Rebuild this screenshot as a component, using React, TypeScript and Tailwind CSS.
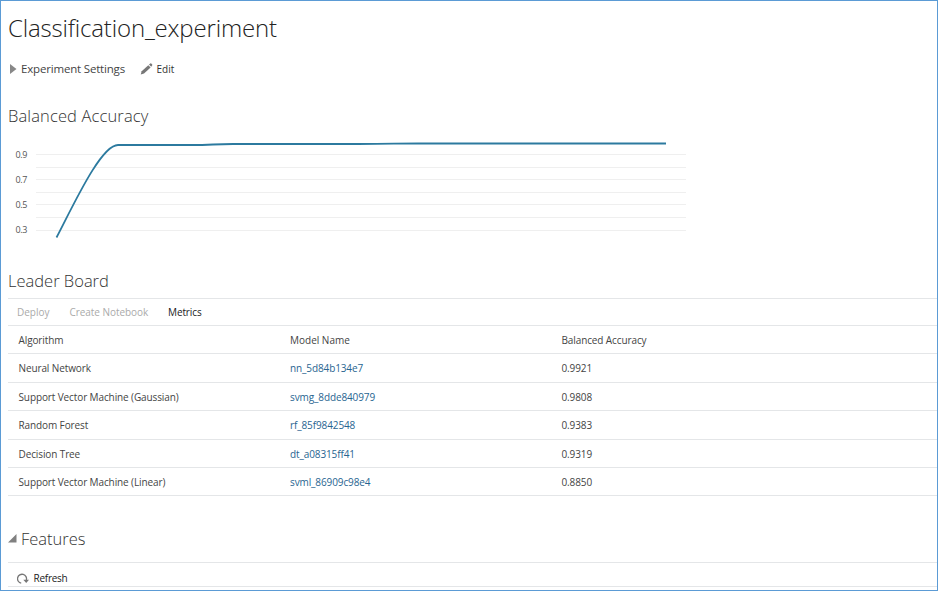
const rows = [
  { algorithm: 'Neural Network', model: 'nn_5d84b134e7', score: '0.9921', size: 'h-[29px]' },
  { algorithm: 'Support Vector Machine (Gaussian)', model: 'svmg_8dde840979', score: '0.9808', size: 'h-[28px] pt-px' },
  { algorithm: 'Random Forest', model: 'rf_85f9842548', score: '0.9383', size: 'h-[29px]' },
  { algorithm: 'Decision Tree', model: 'dt_a08315ff41', score: '0.9319', size: 'h-[28px] pt-px' },
  { algorithm: 'Support Vector Machine (Linear)', model: 'svml_86909c98e4', score: '0.8850', size: 'h-[28px] pt-px' },
];

const columns = 'grid grid-cols-[271.5px_271.5px_1fr] items-center border-b border-[#e4e6e8] pl-[10.5px] tracking-[-0.11px]';

function AccuracyChart() {
  return (
    <svg className="block h-[112px] w-[690px]" viewBox="0 0 690 112" fill="none">
      {[19, 32, 44, 57, 69, 82, 95].map((y) => (
        <path key={y} d={`M28 ${y + 0.5}H678`} stroke="#efefef" />
      ))}
      {['0.9', '0.7', '0.5', '0.3'].map((label, i) => (
        <text key={label} x="7.5" y={22.5 + i * 25.3} fontSize="9" fill="#555" textLength="12">
          {label}
        </text>
      ))}
      <path
        d="M48.5 102.5C66 69 93 10 110 10H183C205 10 205 9 225 9H350C385 9 385 8.5 410 8.5H658"
        stroke="#2c7a9f"
        strokeWidth="1.8"
      />
    </svg>
  );
}

export default function App() {
  return (
    <main className="h-[591px] w-[938px] overflow-hidden border border-[#5b9bd5] bg-white pl-[7px] font-['Open_Sans','Noto_Sans',sans-serif] text-[10px] text-[#444] whitespace-nowrap">
      <h1 className="h-[56px] pt-[10px] text-[24px] leading-[34px] font-light tracking-[-0.17px] text-[#222]">Classification_experiment</h1>
      <div className="flex h-[24px] items-center">
        <svg className="ml-[2px] h-[10px] w-[7px]" viewBox="0 0 7 10"><path d="M0 0L6.5 5L0 10Z" fill="#888" /></svg>
        <span className="ml-[4px] w-[119px] text-[11.5px] tracking-[-0.18px]">Experiment Settings</span>
        <svg className="h-[12px] w-[13px]" viewBox="0 0 13 12" fill="#777">
          <path d="M.7 11.5L1.7 8.3L8.3 2.2L10.6 4.4L4 10.4Z" />
          <path d="M9 1.6L10.3 .5Q10.8 .1 11.3 .6L12.2 1.5Q12.6 2 12.1 2.5L11.2 3.7Z" />
        </svg>
        <span className="ml-[3.5px] text-[#333]">Edit</span>
      </div>
      <h2 className="mt-[22px] h-[32px] text-[16.5px] leading-[26px] font-light tracking-[0.13px] text-[#333]">Balanced Accuracy</h2>
      <AccuracyChart />
      <h2 className="mt-[20px] h-[31px] pt-px text-[16.5px] leading-[26px] font-light text-[#333]">Leader Board</h2>
      <div className="flex h-[28px] items-center border-y border-[#e4e6e8] pl-[9px] text-[#aaa]">
        <span className="w-[52.5px]">Deploy</span>
        <span className="w-[98.5px] tracking-[-0.05px]">Create Notebook</span>
        <span className="tracking-[-0.1px] text-[#222]">Metrics</span>
      </div>
      <div className={`${columns} h-[28px] pt-[2px]`}>
        <span>Algorithm</span><span className="tracking-normal">Model Name</span><span>Balanced Accuracy</span>
      </div>
      {rows.map((row) => (
        <div key={row.model} className={`${columns} ${row.size}`}>
          <span>{row.algorithm}</span>
          <span className="text-[#286591]">{row.model}</span>
          <span>{row.score}</span>
        </div>
      ))}
      <div className="mt-[30px] flex h-[37px] items-start border-b border-[#e4e6e8]">
        <svg className="mt-[8px] mr-[4px] h-[9px] w-[9px]" viewBox="0 0 9 9"><path d="M8.5 0V8.5H0Z" fill="#808080" /></svg>
        <h2 className="text-[16.5px] leading-[26px] font-light text-[#333]">Features</h2>
      </div>
      <div className="flex h-[24px] items-center border-b border-[#e4e6e8] pt-[8px] pl-[9px]">
        <svg className="h-[12px] w-[12px]" viewBox="0 0 12 12" fill="none">
          <path d="M4.2 10.2A4.5 4.5 0 1 1 9.3 7.2" stroke="#777" strokeWidth="1.3" />
          <path d="M6.3 6.8H12L9.2 10Z" fill="#777" />
        </svg>
        <span className="ml-[4.5px] tracking-[-0.25px] text-[#222]">Refresh</span>
      </div>
    </main>
  );
}
